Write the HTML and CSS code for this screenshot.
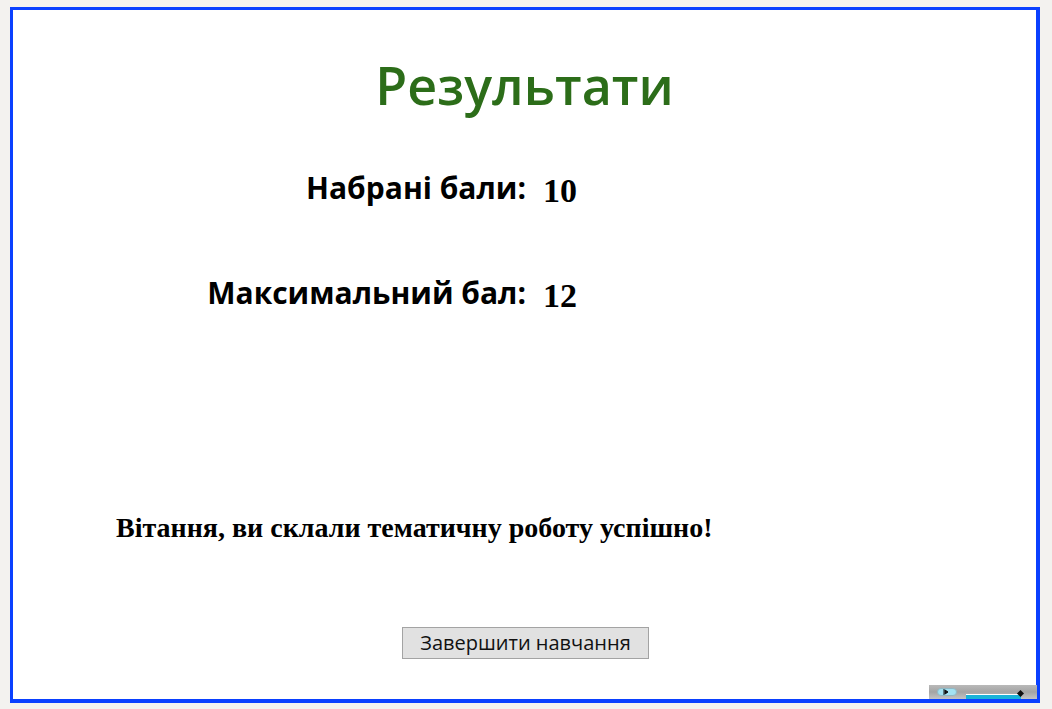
FILE: index.html
```html
<!DOCTYPE html>
<html lang="uk">
<head>
<meta charset="utf-8">
<title>Результати</title>
<link rel="stylesheet" href="styles.css">
</head>
<body>
<div class="frame">
  <h1 class="title">Результати</h1>
  <div class="scores">
    <div class="score-row">
      <span class="label">Набрані бали:</span>
      <span class="value">10</span>
    </div>
    <div class="score-row">
      <span class="label">Максимальний бал:</span>
      <span class="value">12</span>
    </div>
  </div>
  <p class="message">Вітання, ви склали тематичну роботу успішно!</p>
  <div class="actions">
    <button class="finish" type="button">Завершити навчання</button>
  </div>
  <div class="player">
    <span class="play"><svg width="6" height="6" viewBox="0 0 6 6"><path d="M1 0v6M2 1l3 2-3 2z" stroke="#111" stroke-width="1" fill="#111"/></svg></span>
    <span class="track"><span class="fill"></span><span class="thumb"></span></span>
  </div>
</div>
</body>
</html>
```
FILE: styles.css
```css
html, body {
  margin: 0;
  padding: 0;
  background: #f3f2ef;
}
.frame {
  position: relative;
  box-sizing: border-box;
  margin: 7px 0 0 10px;
  width: 1030px;
  height: 696px;
  background: #fff;
  border-style: solid;
  border-color: #0a40ff;
  border-width: 3px 4px 4px 3px;
  display: flex;
  flex-direction: column;
}
.title {
  margin: 45px 0 0;
  text-align: center;
  font-family: "Open Sans", "Noto Sans", sans-serif;
  font-weight: 600;
  font-size: 52px;
  line-height: 60px;
  color: #2c6d19;
}
.scores {
  margin-top: 51px;
  display: flex;
  flex-direction: column;
  gap: 61px;
}
.score-row {
  display: grid;
  grid-template-columns: 513px auto;
  column-gap: 17px;
  align-items: baseline;
  height: 44px;
}
.label {
  text-align: right;
  font-family: "Open Sans", "Noto Sans", sans-serif;
  font-weight: 700;
  font-size: 30px;
  line-height: 44px;
  color: #000;
}
.value {
  font-family: "Liberation Serif", serif;
  font-weight: 700;
  font-size: 34px;
  line-height: 36px;
  color: #000;
  position: relative;
  top: 3px;
}
.message {
  margin: 198px 0 0 103px;
  font-family: "Liberation Serif", serif;
  font-weight: 700;
  font-size: 28px;
  line-height: 30px;
  color: #000;
}
.actions {
  margin-top: 84px;
  padding-left: 389px;
}
.finish {
  box-sizing: border-box;
  width: 247px;
  height: 32px;
  background: #e1e1e1;
  border: 1px solid #a3a3a3;
  border-radius: 0;
  font-family: "Open Sans", "Noto Sans", sans-serif;
  font-size: 20px;
  line-height: 28px;
  color: #111;
  padding: 0;
}
.player {
  position: absolute;
  right: -1px;
  bottom: 0;
  width: 108px;
  height: 14px;
  background: linear-gradient(#b9b9b9, #a4a4a4 50%, #c4c4c4);
  display: flex;
  align-items: center;
}
.play {
  margin-left: 8px;
  width: 20px;
  height: 8px;
  border-radius: 4px;
  background: #a3e1f2;
  border: 1px solid #8fb8c4;
  box-sizing: border-box;
  display: flex;
  align-items: center;
  justify-content: center;
}
.play svg { display: block; margin-left: -3px; }
.track {
  position: relative;
  align-self: flex-end;
  margin-left: 9px;
  width: 57px;
  height: 5px;
  border-top: 1px solid #fff;
  box-sizing: border-box;
}
.fill {
  position: absolute;
  left: 0;
  top: 0;
  bottom: 0;
  width: 55px;
  background: #19b3d8;
}
.thumb {
  position: absolute;
  left: 52px;
  top: -4px;
  width: 5px;
  height: 5px;
  background: #111;
  transform: rotate(45deg);
}
```
